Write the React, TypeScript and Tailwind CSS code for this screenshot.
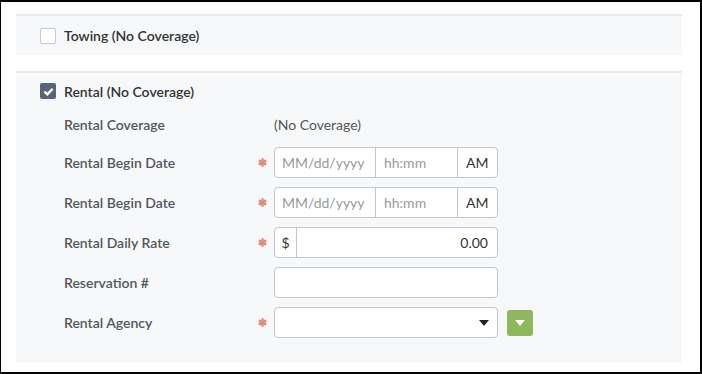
import React from 'react';

const font = { fontFamily: '"Source Sans Pro", Lato, "Liberation Sans", sans-serif' };

function Asterisk() {
    return (
        <svg width="9" height="9" viewBox="0 0 10 10" className="text-[#dd8b7a]">
            <g stroke="currentColor" strokeWidth="2.6" strokeLinecap="butt">
                <line x1="5" y1="0.3" x2="5" y2="9.7" />
                <line x1="0.9" y1="2.65" x2="9.1" y2="7.35" />
                <line x1="0.9" y1="7.35" x2="9.1" y2="2.65" />
            </g>
        </svg>
    );
}

function Checkbox({ checked }: { checked?: boolean }) {
    if (checked) {
        return (
            <span className="flex h-4 w-4 items-center justify-center rounded-[2px] bg-[#5a6478]">
                <svg width="11" height="11" viewBox="0 0 10 10">
                    <path d="M1.3 5.1 L4 7.6 L8.7 2.5" fill="none" stroke="white" strokeWidth="2.2" />
                </svg>
            </span>
        );
    }
    return <span className="h-4 w-4 rounded-[2px] border border-[#c5c8cd] bg-white" />;
}

function Row({
    label,
    required,
    children,
}: {
    label: string;
    required?: boolean;
    children: React.ReactNode;
}) {
    return (
        <div className="flex h-[31px] items-center">
            <div className="w-[192px] text-[14px] font-semibold text-[#52575c]">{label}</div>
            <div className="flex w-[18px] items-center pl-[2px]">{required ? <Asterisk /> : null}</div>
            {children}
        </div>
    );
}

const inputBox = 'flex h-[31px] w-[224px] overflow-hidden rounded-[4px] border border-[#c3c6cc] bg-white text-[14px]';

function DateInput() {
    return (
        <div className={inputBox}>
            <span className="flex w-[101px] items-center border-r border-[#c3c6cc] pl-[7px] text-[#9a9a9a]">
                MM/dd/yyyy
            </span>
            <span className="flex w-[82px] items-center border-r border-[#c3c6cc] pl-[8px] text-[#9a9a9a]">
                hh:mm
            </span>
            <span className="flex flex-1 items-center pl-[8px] text-[#333]">AM</span>
        </div>
    );
}

export default function App() {
    return (
        <div
            style={font}
            className="h-[374px] w-[702px] border-t-2 border-r-2 border-b-2 border-l border-black bg-white pt-[12px] pl-[15px] pr-[18px]"
        >
            <div className="flex h-[41px] items-center gap-[8px] border-t-2 border-[#e8e9ec] bg-[#f7f8fa] px-[24px]">
                <Checkbox />
                <span className="text-[14px] font-semibold text-[#333]">Towing (No Coverage)</span>
            </div>

            <div className="mt-[16px] h-[292px] border-t-2 border-[#e8e9ec] bg-[#f7f8fa]">
                <div className="flex h-[36px] items-center gap-[8px] px-[24px]">
                    <Checkbox checked />
                    <span className="text-[14px] font-semibold text-[#333]">Rental (No Coverage)</span>
                </div>

                <div className="pl-[48px]">
                    <div className="flex h-[30px] items-center">
                        <div className="w-[210px] text-[14px] font-semibold text-[#52575c]">Rental Coverage</div>
                        <div className="text-[14px] text-[#555]">(No Coverage)</div>
                    </div>

                    <div className="mt-[8px] flex flex-col gap-[9px]">
                        <Row label="Rental Begin Date" required>
                            <DateInput />
                        </Row>
                        <Row label="Rental Begin Date" required>
                            <DateInput />
                        </Row>
                        <Row label="Rental Daily Rate" required>
                            <div className={inputBox}>
                                <span className="flex w-[22px] items-center justify-center border-r border-[#c3c6cc] text-[#333]">
                                    $
                                </span>
                                <span className="flex flex-1 items-center justify-end pr-[9px] text-[#333]">0.00</span>
                            </div>
                        </Row>
                        <Row label="Reservation #">
                            <div className={inputBox} />
                        </Row>
                        <Row label="Rental Agency" required>
                            <div className={`${inputBox} items-center justify-end pr-[8px]`}>
                                <svg width="10" height="6" viewBox="0 0 10 6">
                                    <path d="M0 0 H10 L5 6 Z" fill="#222" />
                                </svg>
                            </div>
                            <button className="ml-[9px] flex h-[26px] w-[26px] items-center justify-center rounded-[3px] bg-[#8fb85e]">
                                <svg width="10" height="6" viewBox="0 0 10 6">
                                    <path d="M0 0 H10 L5 6 Z" fill="white" />
                                </svg>
                            </button>
                        </Row>
                    </div>
                </div>
            </div>
        </div>
    );
}
